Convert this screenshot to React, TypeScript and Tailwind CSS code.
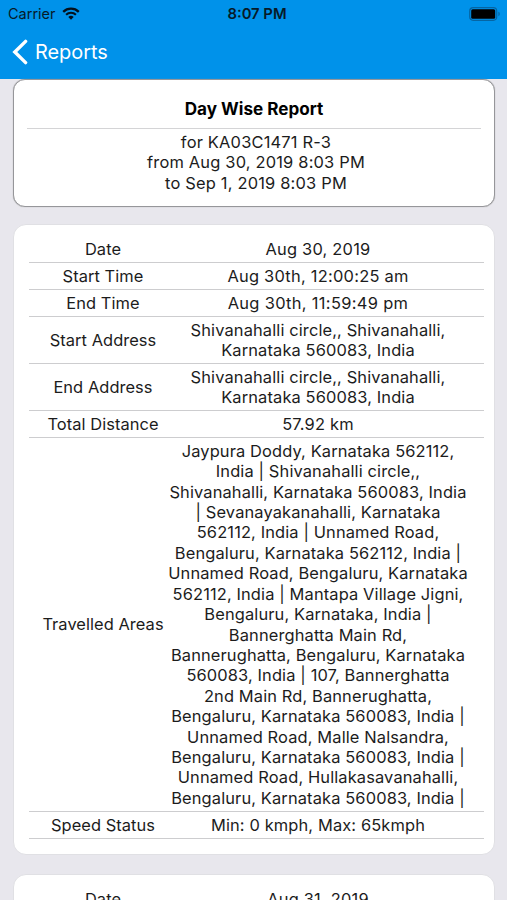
import React from 'react';

interface ReportRow {
  label: string;
  lines: string[];
  height: string;
  tracking?: string;
}

interface RowProps {
  row: ReportRow;
}

const dayOne: ReportRow[] = [
  { label: 'Date', lines: ['Aug 30, 2019'], height: 'h-[27px]', tracking: 'tracking-[0.2px]' },
  { label: 'Start Time', lines: ['Aug 30th, 12:00:25 am'], height: 'h-[27px]', tracking: 'tracking-[0.24px]' },
  { label: 'End Time', lines: ['Aug 30th, 11:59:49 pm'], height: 'h-[27px]', tracking: 'tracking-[0.32px]' },
  { label: 'Start Address', lines: ['Shivanahalli circle,, Shivanahalli,', 'Karnataka 560083, India'], height: 'h-[47px]' },
  { label: 'End Address', lines: ['Shivanahalli circle,, Shivanahalli,', 'Karnataka 560083, India'], height: 'h-[47px]' },
  { label: 'Total Distance', lines: ['57.92 km'], height: 'h-[27px]', tracking: 'tracking-[0.2px]' },
  {
    label: 'Travelled Areas',
    lines: [
      'Jaypura Doddy, Karnataka 562112,',
      'India | Shivanahalli circle,,',
      'Shivanahalli, Karnataka 560083, India',
      '| Sevanayakanahalli, Karnataka',
      '562112, India | Unnamed Road,',
      'Bengaluru, Karnataka 562112, India |',
      'Unnamed Road, Bengaluru, Karnataka',
      '562112, India | Mantapa Village Jigni,',
      'Bengaluru, Karnataka, India |',
      'Bannerghatta Main Rd,',
      'Bannerughatta, Bengaluru, Karnataka',
      '560083, India | 107, Bannerghatta',
      '2nd Main Rd, Bannerughatta,',
      'Bengaluru, Karnataka 560083, India |',
      'Unnamed Road, Malle Nalsandra,',
      'Bengaluru, Karnataka 560083, India |',
      'Unnamed Road, Hullakasavanahalli,',
      'Bengaluru, Karnataka 560083, India |',
    ],
    height: 'h-[374px]',
  },
  { label: 'Speed Status', lines: ['Min: 0 kmph, Max: 65kmph'], height: 'h-[27px]' },
];

const dayTwo: ReportRow[] = [
  { label: 'Date', lines: ['Aug 31, 2019'], height: 'h-[27px]', tracking: 'tracking-[0.2px]' },
];

const Row: React.FC<RowProps> = ({ row }) => (
  <div className={`flex items-center border-b border-[#cdcdcf] text-center whitespace-nowrap ${row.height}`}>
    <div className="w-[136px] shrink-0 pl-3 tracking-[0.05px]">{row.label}</div>
    <div className={`flex w-[319px] flex-col items-center pr-[13px] ${row.tracking ?? 'tracking-[0.12px]'}`}>
      {row.lines.map((line, i) => (
        <div key={i}>{line}</div>
      ))}
    </div>
  </div>
);

const App: React.FC = () => {
  return (
    <div className="h-[900px] w-[507px] overflow-hidden bg-[#e8e7ed] font-['Inter',sans-serif] text-[16.45px] leading-[20.42px] text-[#1c1c1c]">
      {/* Status bar */}
      <div className="h-[79px] bg-[#0092ea]">
        <div className="flex h-7 items-center justify-between pr-[6px] pl-2 text-[#071a28]">
          <div className="flex w-[100px] items-center gap-[6px]">
            <span className="text-[14.5px]">Carrier</span>
            <svg width="18" height="13" viewBox="0 0 18 13" fill="none">
              <path d="M1.2 4.8a11.2 11.2 0 0 1 15.6 0" stroke="#04111c" strokeWidth="2.3" />
              <path d="M4.1 7.8a7 7 0 0 1 9.8 0" stroke="#04111c" strokeWidth="2.1" />
              <path d="M6.3 10.1a3.9 3.9 0 0 1 5.4 0L9 12.8Z" fill="#04111c" />
            </svg>
          </div>
          <span className="pl-[5px] text-[14.8px] font-semibold">8:07 PM</span>
          <div className="flex w-[100px] justify-end">
            <svg width="32" height="14" viewBox="0 0 32 14" fill="none">
              <rect x="0.7" y="0.7" width="27" height="12.6" rx="3.5" stroke="#0565a3" strokeWidth="1.2" />
              <rect x="2.2" y="2.2" width="24" height="9.6" rx="1.5" fill="#000" />
              <path d="M29.4 4.8c1.8.5 1.8 3.9 0 4.4Z" fill="#0565a3" />
            </svg>
          </div>
        </div>

        {/* Navigation */}
        <div className="flex h-[48px] items-center gap-[7px] pl-3 text-white">
          <svg width="16" height="26" viewBox="0 0 16 26" fill="none">
            <path d="M13.6 2.4 2.8 13l10.8 10.6" stroke="currentColor" strokeWidth="3.4" strokeLinecap="round" strokeLinejoin="miter" />
          </svg>
          <span className="text-[19.9px]">Reports</span>
        </div>
      </div>

      <div className="flex flex-col px-[13px]">
        <div className="h-[128px] w-[482px] rounded-[12px] border border-[#96969a] bg-white px-[13px] text-center shadow-[0_0_1px_#999]">
          <div className="flex h-[49px] items-end justify-center border-b border-[#d4d4d6] pb-[9px] text-[17.1px] font-bold text-black">
            Day Wise Report
          </div>
          <div className="pt-[3px] pl-[4px] tracking-[0.18px]">
            <div>for KA03C1471 R-3</div>
            <div>from Aug 30, 2019 8:03 PM</div>
            <div>to Sep 1, 2019 8:03 PM</div>
          </div>
        </div>

        <div className="mt-[17px] h-[631px] w-[482px] rounded-[13px] border border-[#e0e0e4] bg-white pt-[11px] pr-[10px] pl-[15px]">
          {dayOne.map((row) => (
            <Row key={row.label} row={row} />
          ))}
        </div>

        <div className="mt-[19px] h-[631px] w-[482px] rounded-[13px] border border-[#e0e0e4] bg-white pt-[11px] pr-[10px] pl-[15px]">
          {dayTwo.map((row) => (
            <Row key={row.label} row={row} />
          ))}
        </div>
      </div>
    </div>
  );
};

export default App;
